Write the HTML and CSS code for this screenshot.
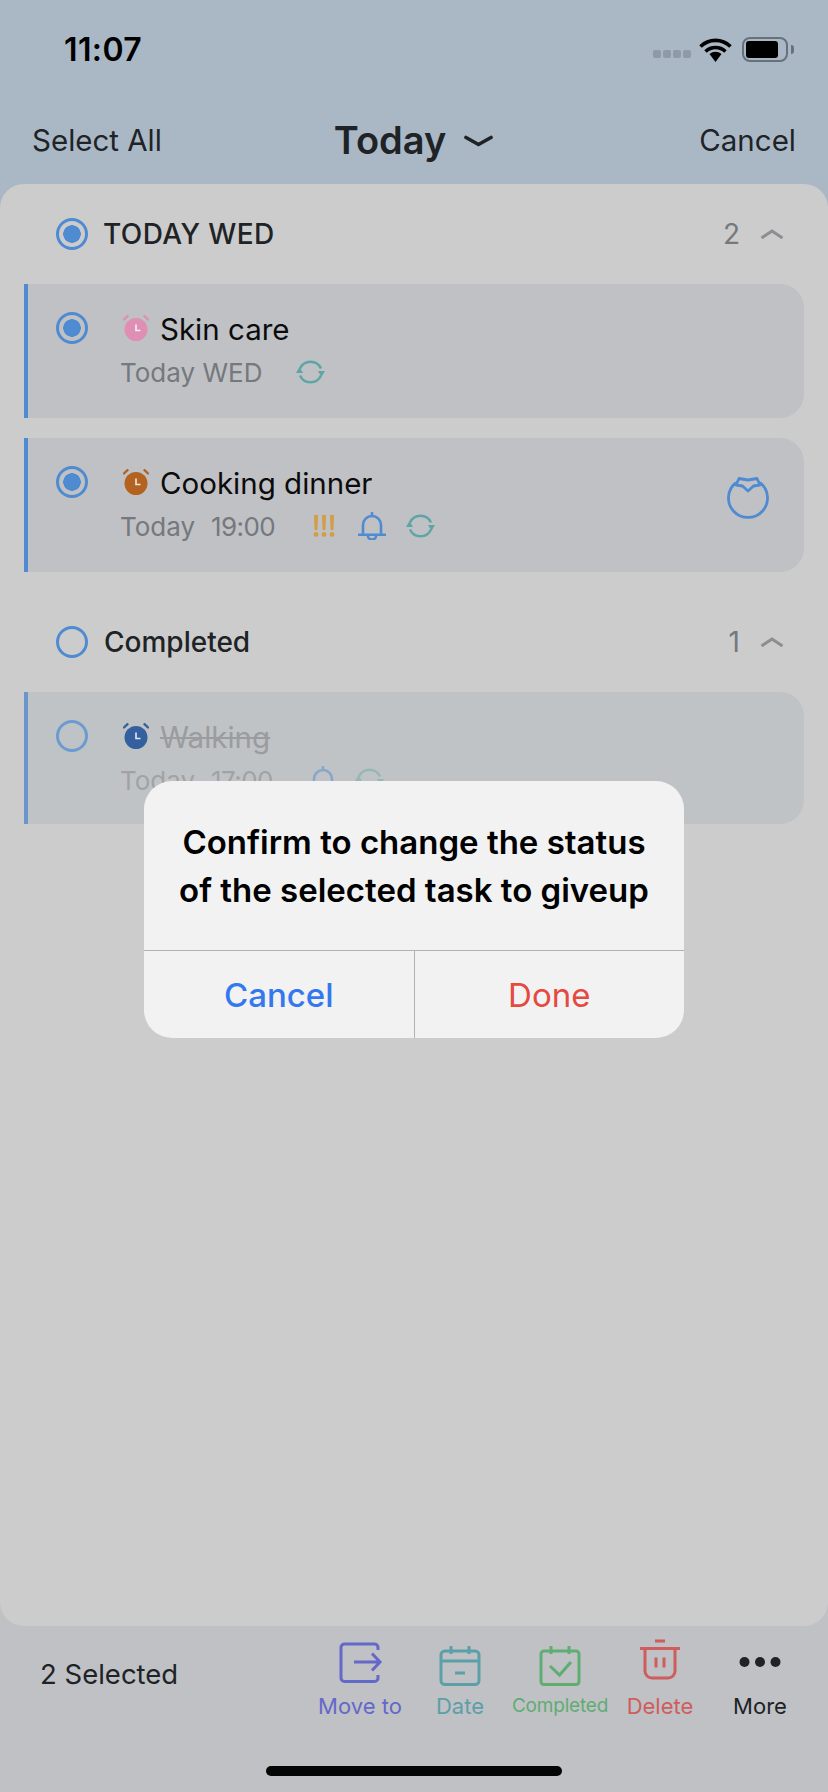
FILE: index.html
```html
<!DOCTYPE html>
<html lang="en">
<head>
<meta charset="utf-8">
<title>Today</title>
<link rel="stylesheet" href="styles.css">
</head>
<body>
<svg class="defs" width="0" height="0" aria-hidden="true">
  <symbol id="alarm" viewBox="0 0 26 26">
    <circle cx="13" cy="14.500" r="11.500" fill="currentColor"/>
    <path d="M1 4.500 4.500 1.200M25 4.500 21.500 1.200" fill="none" stroke="currentColor" stroke-width="2.400" stroke-linecap="round"/>
    <path d="M13 9.500v6h4.500" fill="none" stroke="#fff" stroke-opacity=".85" stroke-width="1.600"/>
  </symbol>
  <symbol id="repeat" viewBox="0 0 29 26">
    <path d="M4 9.500A11.500 11.500 0 0 1 25 9.500M25 16.500A11.500 11.500 0 0 1 4 16.500" fill="none" stroke="currentColor" stroke-width="2.400"/>
    <path d="M3.500 8 7 14H0ZM25.500 18 22 12H29Z" fill="currentColor"/>
  </symbol>
  <symbol id="bell" viewBox="0 0 28 28">
    <path d="M5 22.500V13a9 9 0 0 1 18 0v9.500M1 22.800h26M14 1v2.500M10 24a4 3.500 0 0 0 8 0" fill="none" stroke="currentColor" stroke-width="2.600" stroke-linecap="round"/>
  </symbol>
</svg>

<div class="phone">
  <header class="top">
    <div class="status">
      <span class="time">11:07</span>
      <div class="status-icons">
        <span class="signal"><i></i><i></i><i></i><i></i></span>
        <svg class="wifi" width="33" height="24" viewBox="0 0 33 24"><path d="M1.500 8.500a21.500 21.500 0 0 1 30 0M6.500 13.500a14.500 14.500 0 0 1 20 0" fill="none" stroke="#000" stroke-width="3.600"/><path d="M10.500 16a9 9 0 0 1 12 0L16.500 24Z" fill="#000"/></svg>
        <span class="battery"><i></i></span>
        <span class="battery-tip"></span>
      </div>
    </div>
    <nav class="nav">
      <span class="nav-side">Select All</span>
      <span class="nav-title">Today
        <svg class="nav-chev" width="29" height="12" viewBox="0 0 29 12"><path d="M2 2.500 14.500 9.500 27 2.500" fill="none" stroke="#202326" stroke-width="3.600" stroke-linecap="round"/></svg>
      </span>
      <span class="nav-side">Cancel</span>
    </nav>
  </header>

  <main class="sheet">
    <section class="group">
      <div class="group-head">
        <span class="radio on"></span>
        <span class="group-name caps">TODAY WED</span>
        <span class="group-count">2</span>
        <svg class="chev-up" width="24" height="10" viewBox="0 0 24 10"><path d="M1.500 9 12 2l10.500 7" fill="none" stroke="#8c8e91" stroke-width="3"/></svg>
      </div>
      <article class="card">
        <span class="radio on"></span>
        <div class="card-body">
          <div class="title-row">
            <svg class="alarm pink" width="26" height="26"><use href="#alarm"/></svg>
            <span class="title">Skin care</span>
          </div>
          <div class="sub-row">
            <span class="sub sub-date">Today WED</span>
            <svg class="ic-repeat" width="29" height="26"><use href="#repeat"/></svg>
          </div>
        </div>
      </article>
      <article class="card">
        <span class="radio on"></span>
        <div class="card-body">
          <div class="title-row">
            <svg class="alarm brown" width="26" height="26"><use href="#alarm"/></svg>
            <span class="title">Cooking dinner</span>
          </div>
          <div class="sub-row">
            <span class="sub">Today</span>
            <span class="sub sub-time">19:00</span>
            <svg class="ic-bang" width="22" height="22" viewBox="0 0 22 22"><path d="M1 0h4l-.6 15H1.600ZM9 0h4l-.6 15H9.600ZM17 0h4l-.6 15h-2.800Z" fill="currentColor"/><circle cx="3" cy="19.500" r="2.400" fill="currentColor"/><circle cx="11" cy="19.500" r="2.400" fill="currentColor"/><circle cx="19" cy="19.500" r="2.400" fill="currentColor"/></svg>
            <svg class="ic-bell" width="28" height="28"><use href="#bell"/></svg>
            <svg class="ic-repeat" width="29" height="26"><use href="#repeat"/></svg>
          </div>
        </div>
        <svg class="tomato" width="42" height="42" viewBox="0 0 42 42"><path d="M9 6.600A19.500 19.500 0 1 0 33 6.600" fill="none" stroke="currentColor" stroke-width="2.800"/><path d="M12 2.500 21 4 30 2.500 33 9 26.500 10 21 15 15.500 10 9 9Z" fill="none" stroke="currentColor" stroke-width="2.800" stroke-linejoin="round"/></svg>
      </article>
    </section>
    <section class="group group-done">
      <div class="group-head">
        <span class="radio"></span>
        <span class="group-name">Completed</span>
        <span class="group-count">1</span>
        <svg class="chev-up" width="24" height="10" viewBox="0 0 24 10"><path d="M1.500 9 12 2l10.500 7" fill="none" stroke="#8c8e91" stroke-width="3"/></svg>
      </div>
      <article class="card card-done">
        <span class="radio"></span>
        <div class="card-body">
          <div class="title-row">
            <svg class="alarm navy" width="26" height="26"><use href="#alarm"/></svg>
            <span class="title">Walking</span>
          </div>
          <div class="sub-row">
            <span class="sub">Today</span>
            <span class="sub sub-time">17:00</span>
            <svg class="ic-bell" width="28" height="28"><use href="#bell"/></svg>
            <svg class="ic-repeat" width="29" height="26"><use href="#repeat"/></svg>
          </div>
        </div>
      </article>
    </section>
  </main>

  <footer class="bar">
    <span class="bar-count">2 Selected</span>
    <div class="actions">
      <div class="action move">
        <svg width="42" height="42" viewBox="0 0 42 42"><path d="M39 9V6.500A3.500 3.500 0 0 0 35.500 3H5.500A3.500 3.500 0 0 0 2 6.500V37a3.500 3.500 0 0 0 3.500 3.500h30A3.500 3.500 0 0 0 39 37v-3" fill="none" stroke="currentColor" stroke-width="3"/><path d="M15 21h26M33 12.500 41 21 33 29.500" fill="none" stroke="currentColor" stroke-width="3"/></svg>
        <span>Move to</span>
      </div>
      <div class="action date">
        <svg width="42" height="42" viewBox="0 -3 42 42"><rect x="2" y="7" width="38" height="33.500" rx="4" fill="none" stroke="currentColor" stroke-width="3"/><path d="M2 17h38M12 2v8M30 2v8M16 29h10" fill="none" stroke="currentColor" stroke-width="3"/></svg>
        <span>Date</span>
      </div>
      <div class="action done">
        <svg width="42" height="42" viewBox="0 -3 42 42"><rect x="2" y="7" width="38" height="33.500" rx="3" fill="none" stroke="currentColor" stroke-width="3"/><path d="M12 2v8M30 2v8M11 22l9.500 9L32 18" fill="none" stroke="currentColor" stroke-width="3"/></svg>
        <span>Completed</span>
      </div>
      <div class="action del">
        <svg width="42" height="42" viewBox="0 2 42 42"><path d="M1 9.500h40M16 2h10M6 9.500V32a7 7 0 0 0 7 7h16a7 7 0 0 0 7-7V9.500M17 18.500v10M25 18.500v10" fill="none" stroke="currentColor" stroke-width="3"/></svg>
        <span>Delete</span>
      </div>
      <div class="action more">
        <svg width="42" height="42" viewBox="0 0 42 42"><circle cx="5.500" cy="21" r="5" fill="currentColor"/><circle cx="21" cy="21" r="5" fill="currentColor"/><circle cx="36.500" cy="21" r="5" fill="currentColor"/></svg>
        <span>More</span>
      </div>
    </div>
    <div class="home"></div>
  </footer>

  <div class="modal" role="dialog">
    <p class="modal-text">Confirm to change the status of the selected task to giveup</p>
    <div class="modal-btns">
      <button class="modal-btn cancel">Cancel</button>
      <button class="modal-btn ok">Done</button>
    </div>
  </div>
</div>
</body>
</html>
```
FILE: styles.css
```css
* { box-sizing: border-box; }
html, body { margin: 0; padding: 0; }
body { font-family: Inter, "Liberation Sans", sans-serif; background: #ccc; }
.defs { position: absolute; }

.phone {
  position: relative;
  width: 828px;
  height: 1792px;
  display: flex;
  flex-direction: column;
  overflow: hidden;
  background: #aab8c6;
  color: #202326;
}

.top { height: 184px; flex: none; }
.status {
  height: 99px;
  display: flex;
  align-items: center;
  justify-content: space-between;
  padding: 0 34px 0 64px;
}
.time { font-size: 32px; font-weight: 600; color: #000; letter-spacing: .4px; }
.status-icons { display: flex; align-items: center; }
.signal { display: flex; gap: 2px; margin-right: 8px; margin-top: 8px; }
.signal i { width: 8px; height: 8px; border-radius: 2px; background: #8f9aa6; }
.wifi { margin-right: 10px; }
.battery {
  width: 46px;
  height: 25px;
  border: 2.500px solid #66717c;
  border-radius: 8px;
  padding: 2px;
}
.battery i { display: block; width: 32px; height: 100%; background: #000; border-radius: 3px; }
.battery-tip { width: 3px; height: 9px; margin-left: 3px; background: #66717c; border-radius: 0 3px 3px 0; }

.nav {
  height: 82px;
  display: flex;
  align-items: center;
  justify-content: space-between;
  padding: 0 32px;
}
.nav-side { font-size: 29.500px; font-weight: 400; }
.nav-title { font-size: 38px; font-weight: 600; display: flex; align-items: center; gap: 18px; margin-right: 34px; }
.nav-chev { margin-top: 1px; }

.sheet {
  flex: 1;
  background: #ccc;
  border-radius: 24px;
  padding-top: 34px;
  position: relative;
  z-index: 1;
}
.group-head {
  display: flex;
  align-items: center;
  height: 32px;
  padding: 0 44px 0 56px;
  margin-bottom: 34px;
}
.group-done { margin-top: 54px; }
.group-name { font-size: 28px; font-weight: 500; margin-left: 16px; flex: 1; }
.caps { margin-left: 15px; letter-spacing: .4px; }
.group-count { font-size: 28px; color: #75787c; margin-right: 20px; }
.chev-up { flex: none; }

.radio {
  flex: none;
  width: 32px;
  height: 32px;
  border-radius: 50%;
  border: 3.500px solid #4f8bd0;
  display: block;
}
.radio.on { background: radial-gradient(circle, #4f8bd0 0 8.500px, transparent 9px); }

.card {
  display: flex;
  align-items: flex-start;
  height: 134px;
  margin: 0 24px 20px;
  padding: 28px 35px 0 28px;
  background: #bfc1c5;
  border-left: 4px solid #4f8bd0;
  border-radius: 0 24px 24px 0;
}
.card-body { margin-left: 32px; flex: 1; }
.title-row { display: flex; align-items: center; height: 32px; }
.alarm { margin-left: 3px; margin-right: 11px; flex: none; }
.pink { color: #df8fb4; }
.brown { color: #b3621f; }
.navy { color: #3560a0; }
.title { font-size: 29.500px; color: #0b0b0c; margin-top: 2px; }
.sub-row { display: flex; align-items: center; height: 32px; margin-top: 12px; }
.sub { font-size: 26px; color: #75787c; }
.sub-date { margin-right: 34px; }
.sub-time { margin-left: 16px; margin-right: 38px; letter-spacing: -.6px; }
.ic-repeat { color: #5ea5a5; flex: none; }
.ic-bang { color: #d39d45; flex: none; margin-right: 23px; }
.ic-bell { color: #4f8bd0; flex: none; margin-right: 20px; }
.tomato { color: #4f8bd0; flex: none; margin-top: 10px; overflow: visible; }

.card-done { height: 132px; border-left-color: #6a96cc; background: #c0c3c5; margin-bottom: 0; }
.card-done .radio { border-color: #6a9bd2; }
.card-done .title { color: #9a9c9f; text-decoration: line-through; }
.card-done .sub { color: #a0a3a6; }
.card-done .sub-time { margin-right: 36px; }
.card-done .ic-bell { margin-right: 18px; opacity: .5; }
.card-done .ic-repeat { opacity: .4; }

.bar {
  position: relative;
  flex: none;
  height: 190px;
  margin-top: -24px;
  padding: 39px 18px 0 0;
  background: #bfc1c5;
  display: flex;
  justify-content: flex-end;
}
.bar-count { position: absolute; left: 40px; top: 56px; font-size: 27.500px; line-height: 32px; }
.actions { display: flex; height: 100px; }
.action { width: 100px; display: flex; flex-direction: column; align-items: center; font-size: 22px; line-height: 28px; }
.action svg { flex: none; margin-bottom: 9px; overflow: visible; }
.action.move { color: #6468c8; }
.action.date { color: #5c9fa8; }
.action.done { color: #5fad72; font-size: 19px; letter-spacing: -.2px; }
.action.del { color: #cf5d5d; }
.action.more { color: #202326; }
.home {
  position: absolute;
  left: 266px;
  top: 164px;
  width: 296px;
  height: 10px;
  border-radius: 5px;
  background: #050505;
}

.modal {
  position: absolute;
  left: 144px;
  top: 781px;
  width: 540px;
  height: 257px;
  z-index: 2;
  background: #f2f2f2;
  border-radius: 28px;
  display: flex;
  flex-direction: column;
  overflow: hidden;
}
.modal-text {
  margin: 0;
  height: 169px;
  padding: 37px 24px 0;
  font-size: 33px;
  line-height: 48px;
  font-weight: 600;
  color: #000;
  text-align: center;
}
.modal-btns { flex: 1; display: flex; border-top: 1.500px solid #b2b2b2; }
.modal-btn {
  flex: 1;
  border: 0;
  background: none;
  font: 500 33px Inter, "Liberation Sans", sans-serif;
  padding: 0;
}
.cancel { color: #3478f0; border-right: 1.500px solid #b2b2b2; }
.ok { color: #e5493f; font-weight: 400; }
```
